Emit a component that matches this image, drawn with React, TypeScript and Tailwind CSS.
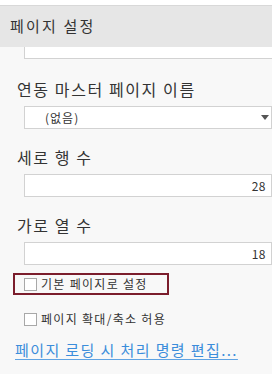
const font = { fontFamily: '"Noto Sans CJK KR", "Noto Sans", sans-serif' };

function Label({ text }: { text: string }) {
  return (
    <div className="ml-[20px] h-[20px] text-[16px] leading-[20px] tracking-[1.6px] text-[#333]">{text}</div>
  );
}

function NumberBox({ value }: { value: string }) {
  return (
    <div className="ml-[27px] mt-[7px] flex h-[23px] w-[248px] items-center justify-end border border-[#d2d2d2] bg-white pr-[5px] text-[12px] tracking-[0.5px] text-[#333]">
      {value}
    </div>
  );
}

function Check({ label, boxed }: { label: string; boxed?: boolean }) {
  return (
    <div
      className={
        boxed
          ? 'ml-[16px] flex h-[22px] w-[156px] items-center border-2 border-[#7b1d2c] pl-[9px]'
          : 'ml-[16px] flex h-[22px] w-[156px] items-center pl-[11px]'
      }
    >
      <span className="h-[13px] w-[13px] border border-[#a8a8a8] bg-white" />
      <span className="ml-[4px] text-[12px] leading-[16px] tracking-[1.3px] text-[#333]">{label}</span>
    </div>
  );
}

export default function App() {
  return (
    <div className="flex h-[374px] w-[272px] flex-col overflow-hidden bg-white" style={font}>
      <div className="h-[6px] border-b border-[#d8d8d8] bg-white" />
      <div className="flex h-[41px] items-center bg-[#e6e6e6] px-[10px] text-[15px] tracking-[2.2px] text-[#333]">
        페이지 설정
      </div>
      <div className="flex flex-1">
        <div className="w-[3px] bg-[#e6e6e6]" />
        <div className="flex-1 bg-[#f8f8f8]">
          <div className="-ml-[3px] flex flex-col">
            <div className="ml-[27px] h-[12px] w-[248px] border-b border-l border-[#d2d2d2] bg-white" />
            <div className="mt-[20px]">
              <Label text="연동 마스터 페이지 이름" />
            </div>
            <div className="relative ml-[27px] mt-[7px] flex h-[23px] w-[248px] items-center border border-[#d2d2d2] bg-white pl-[20px] text-[12px] tracking-[1px] text-[#333]">
              (없음)
              <svg className="absolute left-[236px] top-[8px]" width="8" height="5" viewBox="0 0 8 5">
                <path d="M0 0 L8 0 L4 5 Z" fill="#555" />
              </svg>
            </div>
            <div className="mt-[18px]">
              <Label text="세로 행 수" />
            </div>
            <NumberBox value="28" />
            <div className="mt-[18px]">
              <Label text="가로 열 수" />
            </div>
            <NumberBox value="18" />
            <div className="mt-[8px]">
              <Check label="기본 페이지로 설정" boxed />
            </div>
            <div className="mt-[13px]">
              <Check label="페이지 확대/축소 허용" />
            </div>
            <a
              href="#"
              className="ml-[18px] mt-[10px] self-start text-[15px] leading-[20px] tracking-[1.4px] text-[#3b8ddb] underline decoration-[#5fa3e3] underline-offset-[3px]"
            >
              페이지 로딩 시 처리 명령 편집...
            </a>
          </div>
        </div>
      </div>
    </div>
  );
}
